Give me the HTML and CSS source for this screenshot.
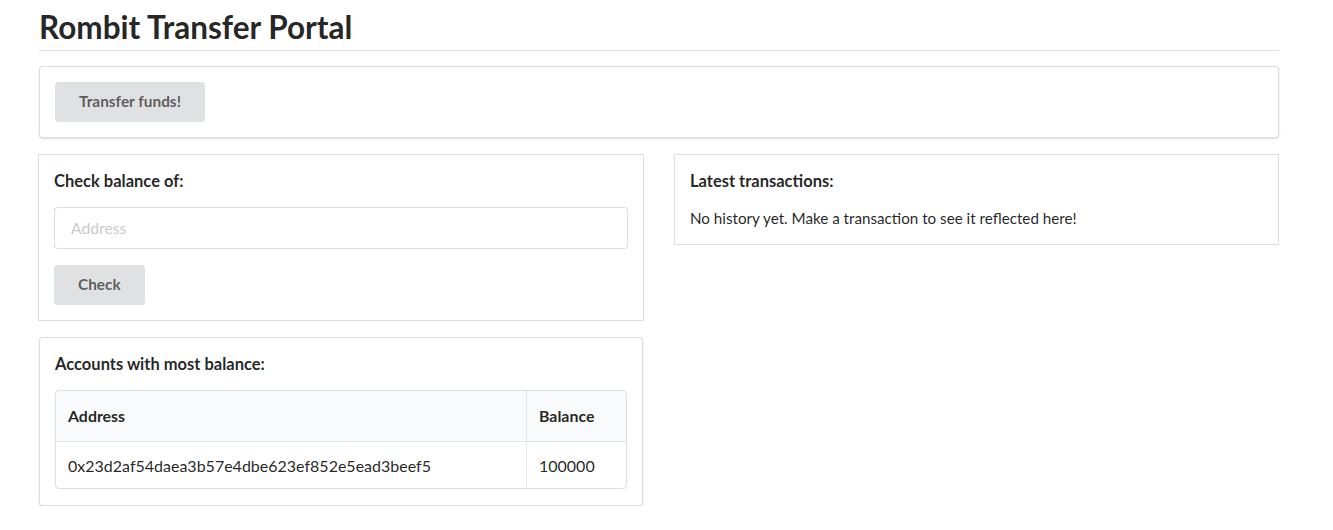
FILE: index.html
```html
<!DOCTYPE html>
<html>
<head>
<meta charset="utf-8">
<link rel="stylesheet" href="styles.css">
</head>
<body>
<div class="container">
  <h1 class="title">Rombit Transfer Portal</h1>
  <div class="segment shadow">
    <button class="btn btn-transfer">Transfer funds!</button>
  </div>
  <div class="grid">
    <div class="col">
      <div class="segment flat check">
        <div class="seg-header">Check balance of:</div>
        <input class="input" type="text" placeholder="Address">
        <button class="btn btn-check">Check</button>
      </div>
      <div class="segment shadow accounts">
        <div class="seg-header">Accounts with most balance:</div>
        <table class="table">
          <thead>
            <tr><th class="c-addr">Address</th><th class="c-bal">Balance</th></tr>
          </thead>
          <tbody>
            <tr><td class="c-addr">0x23d2af54daea3b57e4dbe623ef852e5ead3beef5</td><td class="c-bal">100000</td></tr>
          </tbody>
        </table>
      </div>
    </div>
    <div class="col">
      <div class="segment flat history">
        <div class="seg-header">Latest transactions:</div>
        <p class="empty">No history yet. Make a transaction to see it reflected here!</p>
      </div>
    </div>
  </div>
</div>
</body>
</html>
```

FILE: styles.css
```css
* { box-sizing: border-box; }
html, body {
  margin: 0;
  padding: 0;
  background: #ffffff;
  font-family: Lato, "Helvetica Neue", Arial, sans-serif;
  font-size: 15px;
  color: rgba(0, 0, 0, 0.87);
}
.container {
  width: 1240px;
  margin-left: 39px;
}
.title {
  margin: 9px 0 0 0;
  font-size: 31.5px;
  line-height: 36px;
  font-weight: 700;
  color: rgba(0, 0, 0, 0.87);
  padding-bottom: 5px;
  border-bottom: 1px solid rgba(34, 36, 38, 0.15);
}
.segment {
  background: #fff;
  border: 1px solid rgba(34, 36, 38, 0.15);
  border-radius: 4px;
  padding: 15px;
}
.segment.shadow {
  box-shadow: 0 1px 2px 0 rgba(34, 36, 38, 0.15);
}
.segment.flat {
  border-radius: 0;
}
.container > .segment {
  margin-top: 15px;
}
.btn {
  display: inline-block;
  border: none;
  border-radius: 4px;
  background: #e0e1e2;
  color: rgba(0, 0, 0, 0.6);
  font-family: Lato, "Helvetica Neue", Arial, sans-serif;
  font-weight: 700;
  font-size: 15.4px;
  line-height: 1;
  padding: 0 24px;
  cursor: pointer;
}
.btn-transfer { height: 40px; }
.btn-check { height: 40px; margin-top: 16px; }
.grid {
  display: grid;
  grid-template-columns: 605px 605px;
  column-gap: 30px;
  margin-top: 16px;
  align-items: start;
}
.col {
  display: flex;
  flex-direction: column;
  gap: 16px;
}
.check { margin-left: -1px; }
.accounts { margin-right: 1px; }
.seg-header {
  font-size: 16.5px;
  font-weight: 700;
  line-height: 22px;
  color: rgba(0, 0, 0, 0.87);
}
.input {
  display: block;
  width: 100%;
  height: 42px;
  margin-top: 15px;
  border: 1px solid rgba(34, 36, 38, 0.15);
  border-radius: 4px;
  padding: 0 16px;
  font-family: Lato, "Helvetica Neue", Arial, sans-serif;
  font-size: 15.7px;
  color: rgba(0, 0, 0, 0.87);
  outline: none;
}
.input::placeholder { color: rgba(191, 191, 191, 0.87); }
.empty {
  margin: 16px 0 1px;
  font-size: 15.2px;
  line-height: 20px;
}
.accounts { padding-top: 15px; padding-bottom: 16px; }
.table {
  width: 100%;
  margin-top: 15px;
  border-collapse: separate;
  border-spacing: 0;
  border: 1px solid rgba(34, 36, 38, 0.15);
  border-radius: 4px;
  font-size: 16px;
}
.table th {
  background: #f9fafb;
  text-align: left;
  font-weight: 700;
  font-size: 15.9px;
  height: 51px;
  padding: 0 12px 1px;
  border-bottom: 1px solid rgba(34, 36, 38, 0.1);
  color: rgba(0, 0, 0, 0.87);
}
.table thead th:first-child { border-top-left-radius: 4px; }
.table thead th:last-child { border-top-right-radius: 4px; }
.table td {
  height: 46px;
  padding: 0 12px;
}
.table .c-bal {
  width: 100px;
  border-left: 1px solid rgba(34, 36, 38, 0.1);
}
```
